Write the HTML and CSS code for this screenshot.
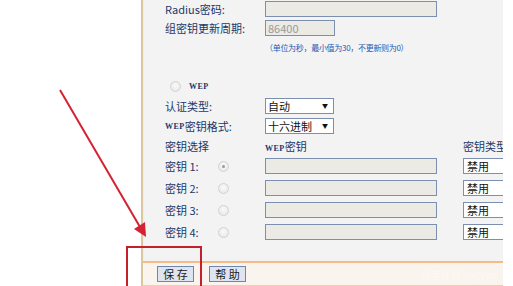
FILE: index.html
```html
<!DOCTYPE html>
<html>
    <head>
        <meta charset="utf-8">
        <link rel="stylesheet" href="styles.css">
    </head>
    <body>
        <div class="page">
            <div class="gutter"></div>
            <div class="panel">
                <div class="form">
                    <div class="row h18">
                        <span class="lbl">Radius密码:</span>
                        <span class="field wide"></span>
                    </div>
                    <div class="row">
                        <span class="lbl">组密钥更新周期:</span>
                        <span class="field short">86400</span>
                    </div>
                    <div class="row h18">
                        <span class="lbl"></span>
                        <span class="note">（单位为秒，最小值为30，不更新则为0）</span>
                    </div>
                    <div class="spacer"></div>
                    <div class="row">
                        <span class="lbl"><i class="radio wep-radio"></i><span class="tiny">WEP</span></span>
                    </div>
                    <div class="row">
                        <span class="lbl">认证类型:</span>
                        <span class="select">自动<b>▼</b></span>
                    </div>
                    <div class="row">
                        <span class="lbl"><span class="tiny">WEP</span>密钥格式:</span>
                        <span class="select">十六进制<b>▼</b></span>
                    </div>
                    <div class="row h19">
                        <span class="lbl">密钥选择</span>
                        <span class="head"><span class="tiny">WEP</span>密钥</span>
                        <span class="head">密钥类型</span>
                    </div>
                    <div class="row key">
                        <span class="lbl"><span class="keyname">密钥 1:</span><i class="radio on"></i></span>
                        <span class="field wide"></span>
                        <span class="kind">禁用</span>
                    </div>
                    <div class="row key">
                        <span class="lbl"><span class="keyname">密钥 2:</span><i class="radio"></i></span>
                        <span class="field wide"></span>
                        <span class="kind">禁用</span>
                    </div>
                    <div class="row key">
                        <span class="lbl"><span class="keyname">密钥 3:</span><i class="radio"></i></span>
                        <span class="field wide"></span>
                        <span class="kind">禁用</span>
                    </div>
                    <div class="row key">
                        <span class="lbl"><span class="keyname">密钥 4:</span><i class="radio"></i></span>
                        <span class="field wide"></span>
                        <span class="kind">禁用</span>
                    </div>
                </div>
                <div class="bar">
                    <button class="btn save">保 存</button>
                    <button class="btn">帮 助</button>
                    <span class="mark">百度经验 jingyan</span>
                </div>
            </div>
        </div>
        <svg class="annot" width="513" height="286" viewBox="0 0 513 286">
            <line x1="60" y1="90" x2="140" y2="227" stroke="#d42232" stroke-width="2"/>
            <polygon points="146,237 134,229 145,222" fill="#d42232"/>
            <rect x="127" y="247" width="74" height="44" fill="none" stroke="#c41f2b" stroke-width="2"/>
        </svg>
    </body>
</html>
```

FILE: styles.css
```css
* {
    box-sizing: border-box;
}
body {
    margin: 0;
    background: #fff;
    font-family: "Noto Sans CJK SC", sans-serif;
    font-size: 11px;
    color: #1b386a;
}
.page {
    display: flex;
    height: 286px;
    overflow: hidden;
}
.gutter {
    width: 141px;
    flex: none;
}
.panel {
    width: 362px;
    flex: none;
    display: flex;
    flex-direction: column;
    background: #f3f3f3;
    border-left: 2px solid #dcc6a2;
    box-shadow: inset 1px 0 0 #f8eddc;
    overflow: hidden;
}
.form {
    padding-left: 22px;
    height: 261px;
}
.row {
    display: grid;
    grid-template-columns: 100px 198px 60px;
    align-items: center;
    height: 20px;
}
.row.h18 {
    height: 18px;
}
.row.h19 {
    height: 19px;
}
.row.key {
    height: 22px;
}
.spacer {
    height: 20px;
}
.lbl {
    display: flex;
    align-items: center;
    white-space: nowrap;
}
.tiny {
    font-family: "Liberation Serif", serif;
    font-size: 8px;
    font-weight: bold;
    letter-spacing: 0.5px;
}
.field {
    height: 16px;
    border: 1px solid #7d8fae;
    background: #ebeae4;
    color: #9a9a9a;
    font-size: 11px;
    line-height: 14px;
    padding-left: 2px;
}
.field.wide {
    width: 172px;
}
.field.short {
    width: 70px;
}
.note {
    font-size: 8px;
    letter-spacing: -0.3px;
    color: #1c58b4;
    white-space: nowrap;
}
.select {
    width: 69px;
    height: 16px;
    border: 1px solid #7d8fae;
    background: #fff;
    color: #111;
    font-size: 11px;
    line-height: 14px;
    padding-left: 2px;
    display: flex;
    justify-content: space-between;
}
.select b {
    font-weight: normal;
    font-size: 6px;
    padding-right: 5px;
}
.head {
    white-space: nowrap;
}
.keyname {
    width: 53px;
}
.radio {
    width: 11px;
    height: 11px;
    border-radius: 50%;
    border: 1px solid #d2d2d2;
    background: radial-gradient(circle at 50% 40%, #fafafa, #e4e4e4);
    position: relative;
}
.wep-radio {
    margin: 0 8px 0 5px;
}
.radio.on::after {
    content: "";
    position: absolute;
    left: 3px;
    top: 3px;
    width: 3px;
    height: 3px;
    border-radius: 50%;
    background: #9a9a9a;
}
.kind {
    width: 60px;
    height: 16px;
    border: 1px solid #7d8fae;
    border-right: none;
    background: #fff;
    color: #111;
    font-size: 11px;
    line-height: 14px;
    padding-left: 3px;
}
.bar {
    display: flex;
    align-items: center;
    gap: 15px;
    height: 25px;
    padding-left: 14px;
    background: #faf4ee;
    border-top: 2px solid #f6bb84;
    border-bottom: 1px solid #ead1b6;
}
.btn {
    height: 16px;
    width: 37px;
    padding: 0;
    border: 1px solid #6f86ad;
    background: #dee5f1;
    font-family: "Noto Sans CJK SC", sans-serif;
    font-size: 11px;
    line-height: 13px;
    color: #1a1a1a;
}
.mark {
    margin-left: auto;
    margin-right: 6px;
    color: rgba(255, 255, 255, 0.45);
    font-size: 10px;
}
.annot {
    position: absolute;
    top: 0;
    left: 0;
    pointer-events: none;
}
```
